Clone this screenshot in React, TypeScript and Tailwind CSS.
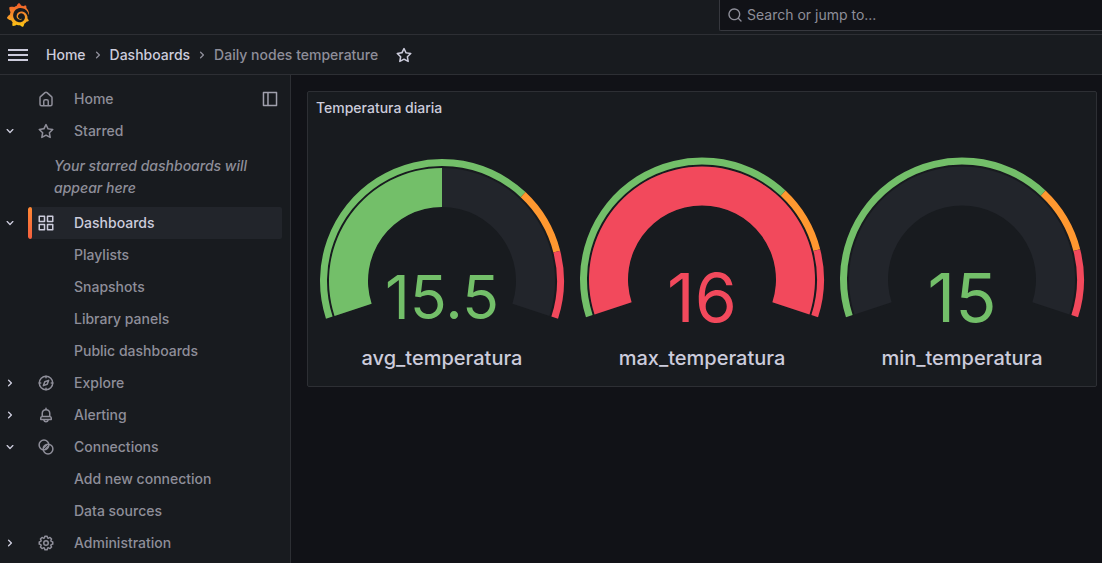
import type { ReactNode } from "react";
import { SiGrafana } from "react-icons/si";

const ICONS = {
  home: "M20,8h0L14,2.74a3,3,0,0,0-4,0L4,8a3,3,0,0,0-1,2.26V19a3,3,0,0,0,3,3H18a3,3,0,0,0,3-3V10.25A3,3,0,0,0,20,8ZM14,20H10V15a1,1,0,0,1,1-1h2a1,1,0,0,1,1,1Zm5-1a1,1,0,0,1-1,1H16V15a3,3,0,0,0-3-3H11a3,3,0,0,0-3,3v5H6a1,1,0,0,1-1-1V10.25a1,1,0,0,1,.34-.75l6-5.25a1,1,0,0,1,1.32,0l6,5.25a1,1,0,0,1,.34.75Z",
  star: "M22,9.67A1,1,0,0,0,21.14,9l-5.69-.83L12.9,3a1,1,0,0,0-1.8,0L8.55,8.16,2.86,9a1,1,0,0,0-.81.68,1,1,0,0,0,.25,1l4.13,4-1,5.68A1,1,0,0,0,6.9,21.44L12,18.77l5.1,2.67a.93.93,0,0,0,.46.12,1,1,0,0,0,.59-.19,1,1,0,0,0,.4-1l-1-5.68,4.13-4A1,1,0,0,0,22,9.67Zm-6.15,4a1,1,0,0,0-.29.88l.72,4.2-3.76-2a1.06,1.06,0,0,0-.94,0l-3.76,2,.72-4.2a1,1,0,0,0-.29-.88l-3-3,4.21-.61a1,1,0,0,0,.76-.55L12,5.7l1.88,3.82a1,1,0,0,0,.76.55l4.21.61Z",
  apps: "M10,13H3a1,1,0,0,0-1,1v7a1,1,0,0,0,1,1h7a1,1,0,0,0,1-1V14A1,1,0,0,0,10,13ZM9,20H4V15H9ZM21,2H14a1,1,0,0,0-1,1v7a1,1,0,0,0,1,1h7a1,1,0,0,0,1-1V3A1,1,0,0,0,21,2ZM20,9H15V4h5Zm1,4H14a1,1,0,0,0-1,1v7a1,1,0,0,0,1,1h7a1,1,0,0,0,1-1V14A1,1,0,0,0,21,13Zm-1,7H15V15h5ZM10,2H3A1,1,0,0,0,2,3v7a1,1,0,0,0,1,1h7a1,1,0,0,0,1-1V3A1,1,0,0,0,10,2ZM9,9H4V4H9Z",
  bell: "M18,13.18V10a6,6,0,0,0-5-5.91V3a1,1,0,0,0-2,0V4.09A6,6,0,0,0,6,10v3.18A3,3,0,0,0,4,16v2a1,1,0,0,0,1,1H8.14a4,4,0,0,0,7.72,0H19a1,1,0,0,0,1-1V16A3,3,0,0,0,18,13.18ZM8,10a4,4,0,0,1,8,0v3H8Zm4,10a2,2,0,0,1-1.72-1h3.44A2,2,0,0,1,12,20Zm6-3H6V16a1,1,0,0,1,1-1H17a1,1,0,0,1,1,1Z",
  cog: "M21.32,9.55l-1.89-.63.89-1.78A1,1,0,0,0,20.13,6L18,3.87a1,1,0,0,0-1.15-.19l-1.78.89-.63-1.89A1,1,0,0,0,13.5,2h-3a1,1,0,0,0-.95.68L8.92,4.57,7.14,3.68A1,1,0,0,0,6,3.87L3.87,6a1,1,0,0,0-.19,1.15l.89,1.78-1.89.63A1,1,0,0,0,2,10.5v3a1,1,0,0,0,.68.95l1.89.63-.89,1.78A1,1,0,0,0,3.87,18L6,20.13a1,1,0,0,0,1.15.19l1.78-.89.63,1.89a1,1,0,0,0,.95.68h3a1,1,0,0,0,.95-.68l.63-1.89,1.78.89A1,1,0,0,0,18,20.13L20.13,18a1,1,0,0,0,.19-1.15l-.89-1.78,1.89-.63A1,1,0,0,0,22,13.5v-3A1,1,0,0,0,21.32,9.55ZM20,12.78l-1.2.4A2,2,0,0,0,17.64,16l.57,1.14-1.1,1.1L16,17.64a2,2,0,0,0-2.79,1.16l-.4,1.2H11.22l-.4-1.2A2,2,0,0,0,8,17.64l-1.14.57-1.1-1.1L6.36,16A2,2,0,0,0,5.2,13.18L4,12.78V11.22l1.2-.4A2,2,0,0,0,6.36,8L5.79,6.89l1.1-1.1L8,6.36A2,2,0,0,0,10.82,5.2l.4-1.2h1.56l.4,1.2A2,2,0,0,0,16,6.36l1.14-.57,1.1,1.1L17.64,8a2,2,0,0,0,1.16,2.79l1.2.4ZM12,8a4,4,0,1,0,4,4A4,4,0,0,0,12,8Zm0,6a2,2,0,1,1,2-2A2,2,0,0,1,12,14Z",
  search: "M21.71,20.29,18,16.61A9,9,0,1,0,16.61,18l3.68,3.68a1,1,0,0,0,1.42,0A1,1,0,0,0,21.71,20.29ZM11,18a7,7,0,1,1,7-7A7,7,0,0,1,11,18Z",
  down: "M17,9.17a1,1,0,0,0-1.41,0L12,12.71,8.46,9.17a1,1,0,0,0-1.41,0,1,1,0,0,0,0,1.42l4.24,4.24a1,1,0,0,0,1.42,0L17,10.59A1,1,0,0,0,17,9.17Z",
  right: "M14.83,11.29,10.59,7.05a1,1,0,0,0-1.42,0,1,1,0,0,0,0,1.41L12.71,12,9.17,15.54a1,1,0,0,0,0,1.41,1,1,0,0,0,.71.29,1,1,0,0,0,.71-.29l4.24-4.24A1,1,0,0,0,14.83,11.29Z",
};

function Icon({ name, className = "size-4" }: { name: keyof typeof ICONS; className?: string }) {
  return (
    <svg viewBox="0 0 24 24" fill="currentColor" aria-hidden="true" className={`shrink-0 ${className}`}>
      <path d={ICONS[name]} />
    </svg>
  );
}

function LineIcon({ children }: { children: ReactNode }) {
  return (
    <svg
      viewBox="0 0 24 24"
      fill="none"
      stroke="currentColor"
      strokeWidth="2"
      strokeLinecap="round"
      strokeLinejoin="round"
      aria-hidden="true"
      className="size-[18px] shrink-0"
    >
      {children}
    </svg>
  );
}

const compass = (
  <LineIcon>
    <circle cx="12" cy="12" r="9" />
    <path d="M12 3v2M12 19v2M3 12h2M19 12h2" />
    <path d="M15.500 8.500 13.600 13.600 8.500 15.500 10.400 10.400Z" />
  </LineIcon>
);

const connections = (
  <LineIcon>
    <circle cx="9.300" cy="9.300" r="6.500" />
    <circle cx="14.700" cy="14.700" r="6.500" />
    <path d="M9 13 13 9M11 15 15 11" />
  </LineIcon>
);

type Item = { label: string; icon: ReactNode; open?: boolean; active?: boolean; note?: string; children?: string[] };

const NAV: Item[] = [
  { label: "Home", icon: <Icon name="home" className="size-[18px]" /> },
  {
    label: "Starred",
    icon: <Icon name="star" className="size-[18px]" />,
    open: true,
    note: "Your starred dashboards will appear here",
  },
  {
    label: "Dashboards",
    icon: <Icon name="apps" className="size-[18px]" />,
    open: true,
    active: true,
    children: ["Playlists", "Snapshots", "Library panels", "Public dashboards"],
  },
  { label: "Explore", icon: compass, open: false },
  { label: "Alerting", icon: <Icon name="bell" className="size-[18px]" />, open: false },
  { label: "Connections", icon: connections, open: true, children: ["Add new connection", "Data sources"] },
  { label: "Administration", icon: <Icon name="cog" className="size-[18px]" />, open: false },
];

function NavItem({ item }: { item: Item }) {
  return (
    <li>
      <div className="flex h-8 items-center pr-2">
        <div className="flex w-7 shrink-0 pl-0.5">
          {item.open !== undefined && (
            <button type="button" aria-expanded={item.open} aria-label={`Toggle ${item.label}`} className="text-[#ccccdc]">
              <Icon name={item.open ? "down" : "right"} />
            </button>
          )}
        </div>
        <a
          href="#"
          className={`flex h-8 flex-1 items-center overflow-hidden rounded-xs ${item.active ? "bg-[#22252b] text-[#ccccdc]" : ""}`}
        >
          <span
            className={`h-full w-1 shrink-0 rounded-xs ${item.active ? "bg-linear-to-b from-[#ff8833] to-[#f55f3e]" : ""}`}
          />
          <span className="ml-[5px] mr-[19px]">{item.icon}</span>
          {item.label}
        </a>
        {item.label === "Home" && (
          <button type="button" aria-label="Undock menu" className="mr-[3px] text-[#a0a0ad]">
            <LineIcon>
              <path d="M3.300 3.300h17.400v17.400H3.300ZM9.300 3.300v17.400" />
            </LineIcon>
          </button>
        )}
      </div>
      {item.note && <p className="py-2 pl-[54px] pr-8 leading-[22px] italic">{item.note}</p>}
      {item.children && (
        <ul>
          {item.children.map((child) => (
            <li key={child}>
              <a href="#" className="flex h-8 items-center pl-[74px]">
                {child}
              </a>
            </li>
          ))}
        </ul>
      )}
    </li>
  );
}

const GREEN = "#73bf69";
const ORANGE = "#ff9830";
const RED = "#f2495c";
const TRACK = "#22252b";

// Annular sector between two fractions of the 216 degree sweep.
function sector(cy: number, from: number, to: number, outer: number, inner: number) {
  const point = (t: number, r: number) => {
    const a = ((198 - 216 * t) * Math.PI) / 180;
    return `${(130 + r * Math.cos(a)).toFixed(2)} ${(cy - r * Math.sin(a)).toFixed(2)}`;
  };
  const large = (to - from) * 216 > 180 ? 1 : 0;
  return `M${point(from, outer)}A${outer} ${outer} 0 ${large} 1 ${point(to, outer)}L${point(to, inner)}A${inner} ${inner} 0 ${large} 0 ${point(from, inner)}Z`;
}

type GaugeData = { label: string; value: string; fill: number; color: string; size: number; cy: number; baseline: number };

const GAUGES: GaugeData[] = [
  { label: "avg_temperatura", value: "15.5", fill: 0.5, color: GREEN, size: 61, cy: 157, baseline: 195 },
  { label: "max_temperatura", value: "16", fill: 1, color: RED, size: 68, cy: 155.5, baseline: 198 },
  { label: "min_temperatura", value: "15", fill: 0, color: GREEN, size: 68, cy: 155.5, baseline: 198 },
];

function Gauge({ label, value, fill, color, size, cy, baseline }: GaugeData) {
  return (
    <svg viewBox="0 0 260 262" role="img" aria-label={`${label}: ${value}`} className="block w-full">
      <path d={sector(cy, 0, 1, 113, 74)} fill={TRACK} />
      {fill > 0 && <path d={sector(cy, 0, fill, 113, 74)} fill={color} />}
      <path d={sector(cy, 0, 0.7, 122, 115)} fill={GREEN} />
      <path d={sector(cy, 0.7, 0.85, 122, 115)} fill={ORANGE} />
      <path d={sector(cy, 0.85, 1, 122, 115)} fill={RED} />
      <text x="130" y={baseline} textAnchor="middle" fontSize={size} fontWeight="400" fill={color}>
        {value}
      </text>
      <text x="130" y="241" textAnchor="middle" fontSize="20" fontWeight="500" fill="#ccccdc">
        {label}
      </text>
    </svg>
  );
}

export default function App() {
  return (
    <div className="flex min-h-screen flex-col bg-[#111217] font-['Inter','Liberation_Sans',sans-serif] text-sm font-medium text-[#8e8e99]">
      <header className="bg-[#181b1f]">
        <div className="flex h-[35px] items-start justify-between border-b border-[#2d2f34]">
          <a href="#" aria-label="Grafana" className="pl-1.5 pt-[3px]">
            <svg width="0" height="0" className="absolute" aria-hidden="true">
              <linearGradient id="flame" x1="0" y1="1" x2="0" y2="0">
                <stop offset="0" stopColor="#fcc80f" />
                <stop offset="0.4" stopColor="#f79a28" />
                <stop offset="1" stopColor="#f05a2b" />
              </linearGradient>
            </svg>
            <SiGrafana size={24} fill="url(#flame)" />
          </a>
          <label className="flex h-[31px] w-[383px] items-center gap-1 rounded-bl-xs border-b border-l border-[#36383e] bg-[#111217] pl-[7px]">
            <Icon name="search" />
            <input
              type="text"
              aria-label="Search or jump to"
              placeholder="Search or jump to..."
              className="min-w-0 flex-1 bg-transparent font-normal outline-none placeholder:text-[#8e8e99]"
            />
          </label>
        </div>
        <div className="flex h-10 items-center border-b border-[#2d2f34] pl-2">
          <button type="button" aria-label="Toggle menu" className="mr-[18px] text-[#ccccdc]">
            <svg viewBox="0 0 20 12" fill="currentColor" className="h-3 w-5">
              <path d="M0 0h20v2H0ZM0 5h20v2H0ZM0 10h20v2H0Z" />
            </svg>
          </button>
          <nav aria-label="Breadcrumbs" className="flex items-center gap-1">
            <a href="#" className="text-[#ccccdc]">Home</a>
            <Icon name="right" />
            <a href="#" className="text-[#ccccdc]">Dashboards</a>
            <Icon name="right" />
            <span>Daily nodes temperature</span>
          </nav>
          <button type="button" aria-label="Mark as favorite" className="ml-[17px] text-[#ccccdc]">
            <Icon name="star" className="size-[18px]" />
          </button>
        </div>
      </header>
      <div className="flex flex-1">
        <aside className="w-[291px] shrink-0 border-r border-[#2d2f34] bg-[#181b1f] pt-2">
          <nav aria-label="Main">
            <ul>
              {NAV.map((item) => (
                <NavItem key={item.label} item={item} />
              ))}
            </ul>
          </nav>
        </aside>
        <main className="min-w-0 flex-1 pl-4 pr-[5px] pt-4">
          <section className="rounded-xs border border-[#2d2f34] bg-[#181b1f]">
            <h2 className="flex h-8 items-center px-2 text-[#ccccdc]">Temperatura diaria</h2>
            <div className="grid grid-cols-3 px-1">
              {GAUGES.map((gauge) => (
                <Gauge key={gauge.label} {...gauge} />
              ))}
            </div>
          </section>
        </main>
      </div>
    </div>
  );
}
